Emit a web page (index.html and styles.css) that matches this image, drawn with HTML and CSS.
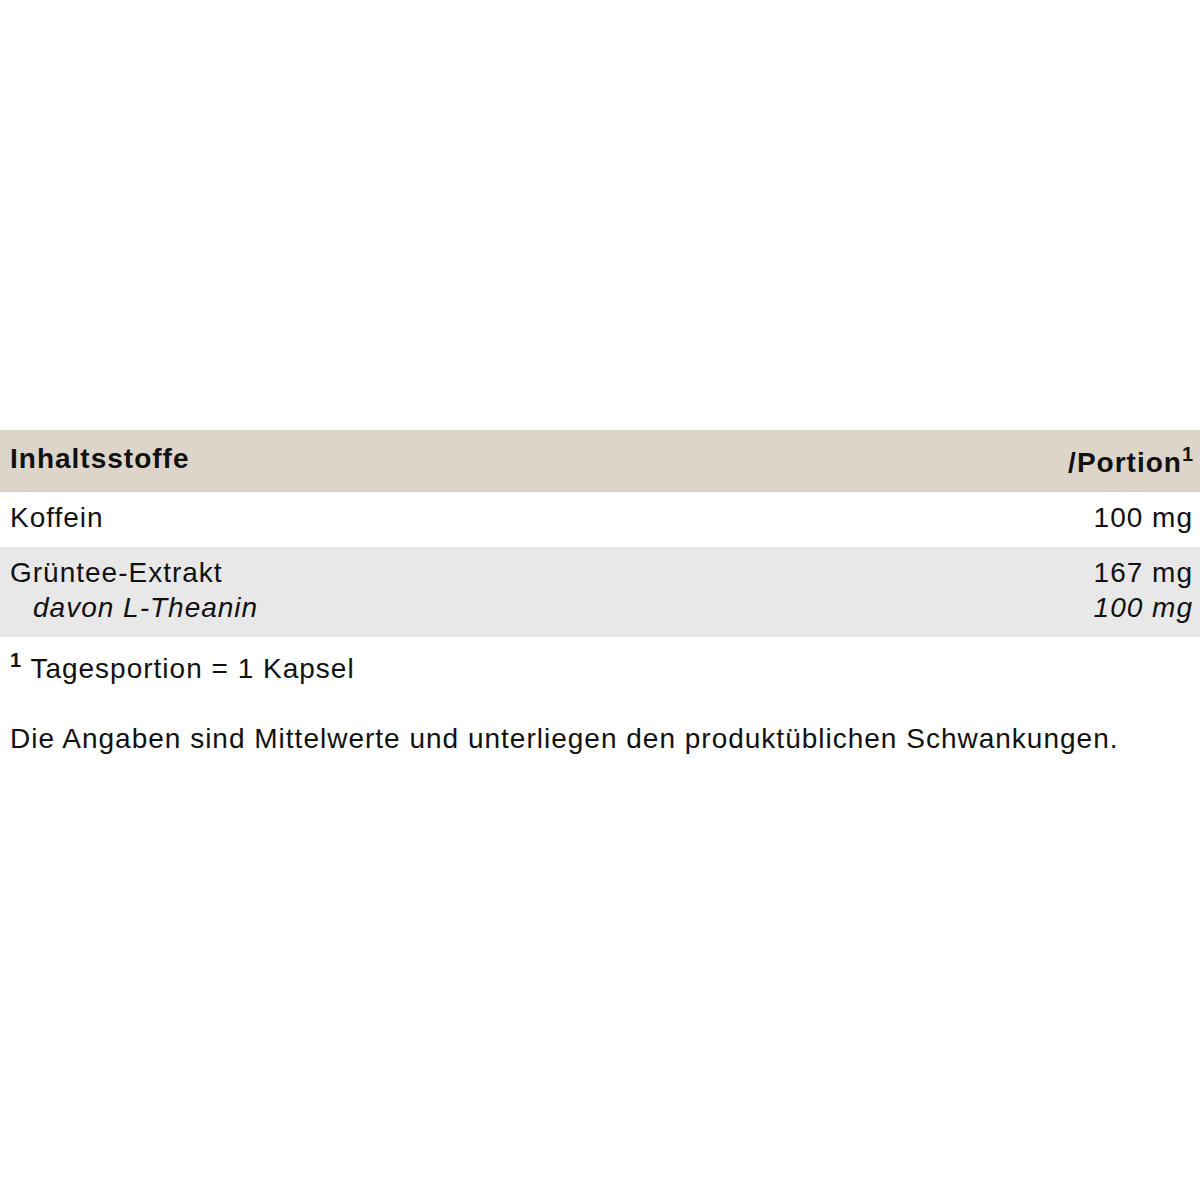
FILE: index.html
```html
<!DOCTYPE html>
<html lang="de">
<head>
<meta charset="utf-8">
<link rel="stylesheet" href="styles.css">
</head>
<body>
<main class="page">
  <section class="nutri">
    <div class="row head">
      <div class="name">Inhaltsstoffe</div>
      <div class="val portion">/Portion<sup>1</sup></div>
    </div>
    <div class="row r1">
      <div class="name">Koffein</div>
      <div class="val">100 mg</div>
    </div>
    <div class="row r2">
      <div class="name">Grüntee-Extrakt<br><em class="sub">davon L-Theanin</em></div>
      <div class="val">167 mg<br><em>100 mg</em></div>
    </div>
  </section>
  <p class="foot"><sup>1</sup> Tagesportion = 1 Kapsel</p>
  <p class="note">Die Angaben sind Mittelwerte und unterliegen den produktüblichen Schwankungen.</p>
</main>
</body>
</html>
```
FILE: styles.css
```css
html, body {
  margin: 0;
  padding: 0;
  background: #fff;
}
.page {
  padding-top: 430px;
  font-family: "Liberation Sans", Arial, sans-serif;
  font-size: 28px;
  letter-spacing: 1px;
  line-height: 35px;
  color: #111;
}
.row {
  display: flex;
  justify-content: space-between;
  align-items: flex-start;
  padding: 0 7px 0 10px;
  box-sizing: border-box;
}
.val { text-align: right; }
.head {
  height: 62px;
  background: #ddd5ca;
  border-bottom: 1px solid #d6c9bd;
  font-weight: bold;
  padding-top: 11px;
}
.portion {
  padding-top: 4px;
}
.head sup {
  font-size: 20px;
  line-height: 0;
  vertical-align: 11px;
  letter-spacing: 0;
}
.r1 {
  height: 55px;
  padding-top: 8px;
}
.r2 {
  height: 90px;
  padding-top: 8px;
  background: #e8e8e8;
}
.sub {
  padding-left: 23px;
}
.foot {
  margin: 14px 0 0 10px;
}
.foot sup {
  font-size: 20px;
  font-weight: bold;
  line-height: 0;
  vertical-align: 11px;
}
.note {
  margin: 35px 0 0 10px;
}
```
